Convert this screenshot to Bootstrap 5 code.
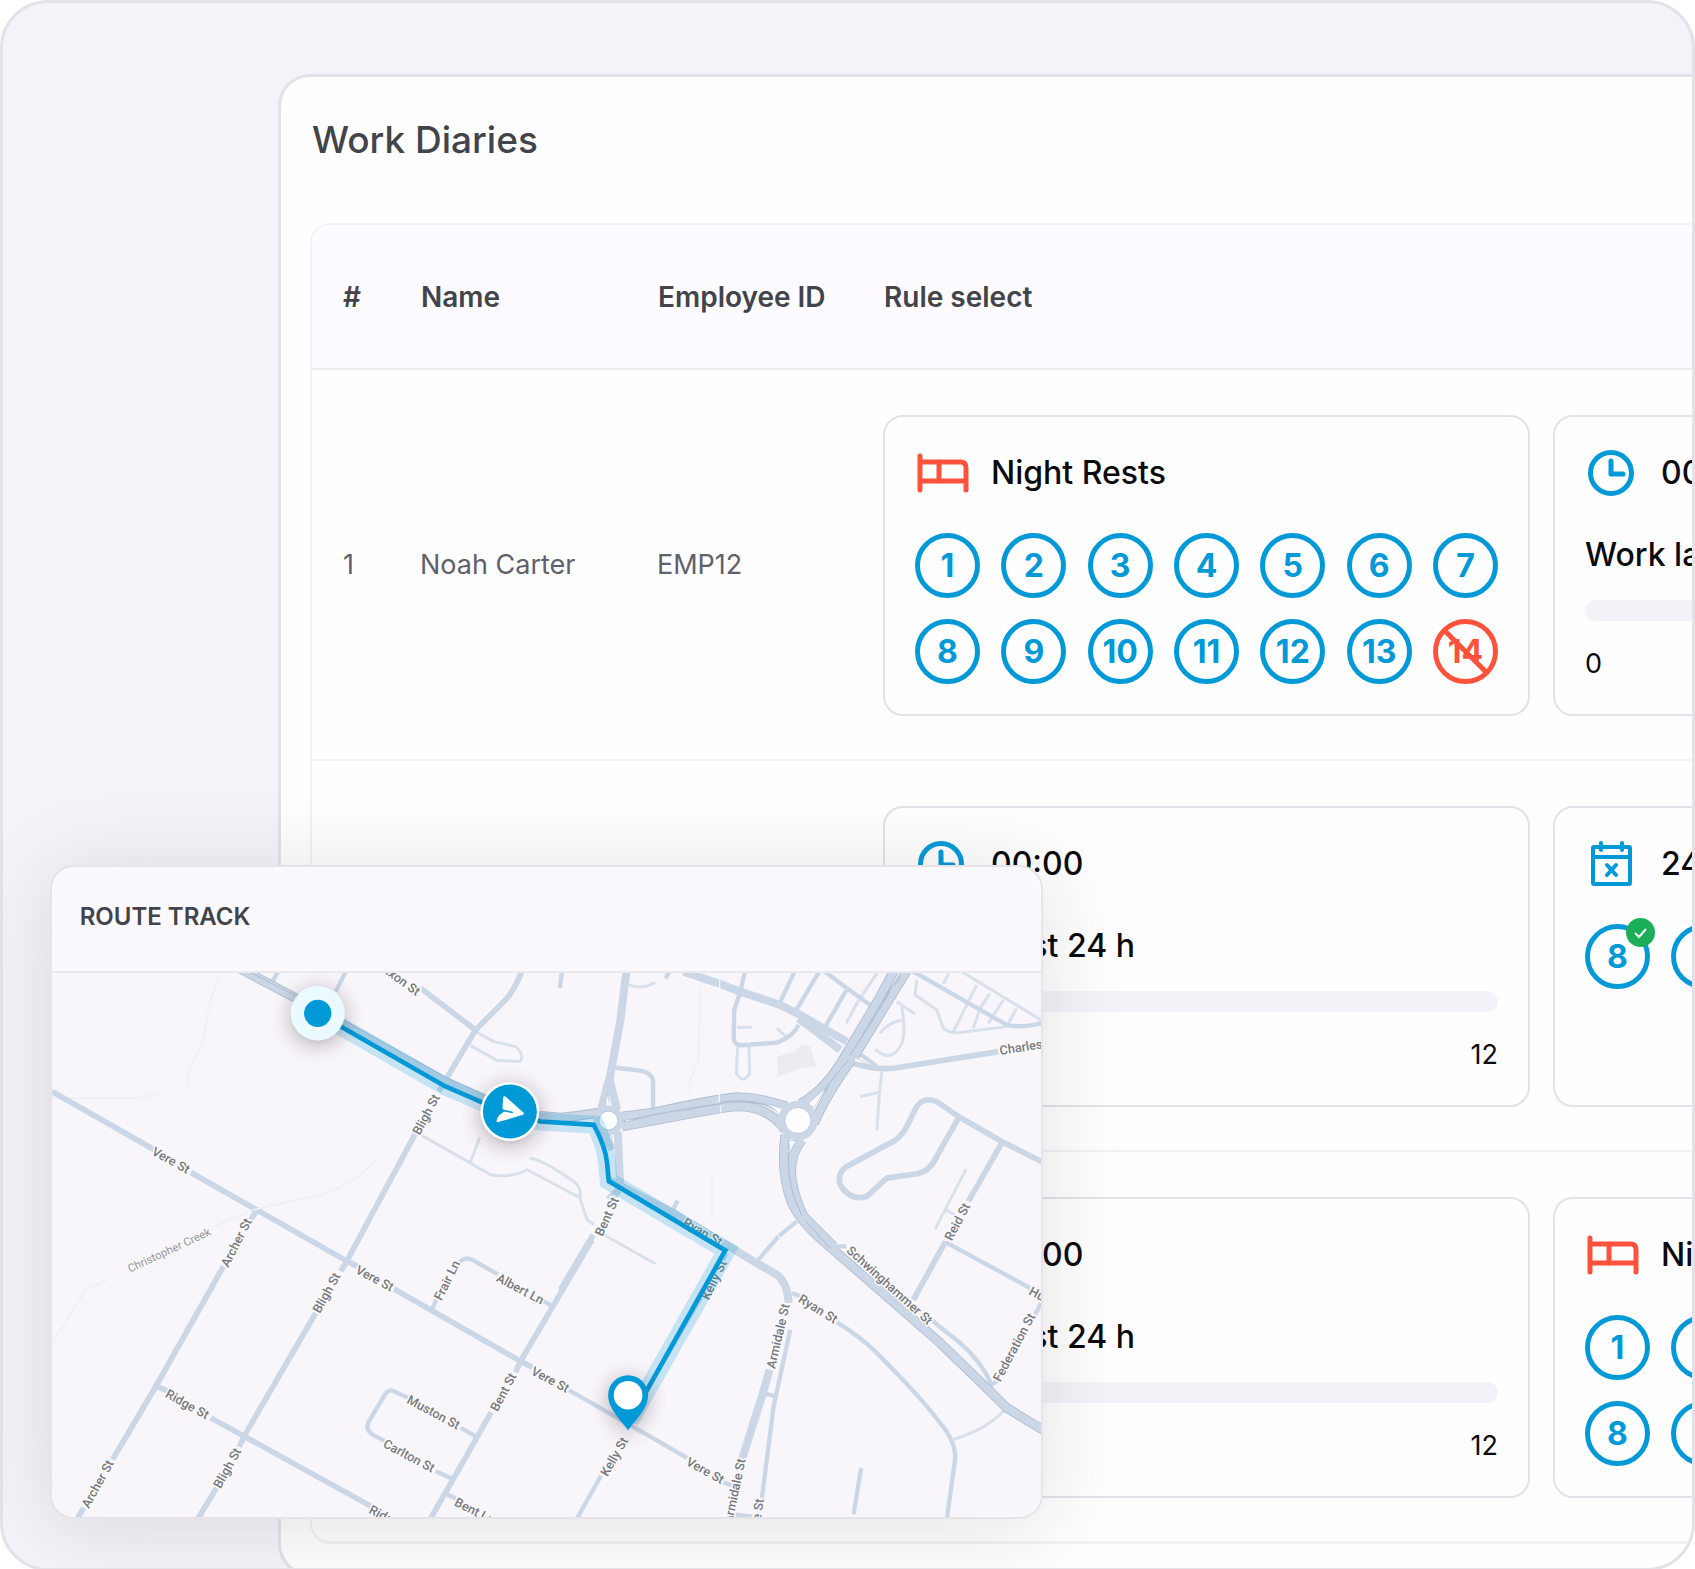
<!DOCTYPE html>
<html lang="en">
<head>
<meta charset="utf-8">
<meta name="viewport" content="width=device-width, initial-scale=1">
<title>Work Diaries</title>
<link href="https://cdn.jsdelivr.net/npm/bootstrap@5.3.0/dist/css/bootstrap.min.css" rel="stylesheet">
<style>
  :root { --blue: #0099d8; --red: #ff523b; --ink: #43444b; --line: #e3e1e9; }
  body { font-family: Inter, "Liberation Sans", sans-serif; background: #fff; }
  .stage { background: #f5f3f9; border: 3px solid #e4e2e8; border-radius: 48px; }
  .diary-panel { background: #fefefe; border: 3px solid #e4e2e8; border-right: 0; border-radius: 32px 0 0 32px; margin: 71px 0 -8px 275px; padding: 39px 0 29px 29px; }
  .diary-title { font-size: 37px; line-height: 48px; font-weight: 500; color: var(--ink); margin-bottom: 59px; padding-left: 2px; }
  .grid-frame { border: 2px solid #f3f1f5; border-bottom-width: 3px; border-right: 0; border-radius: 20px 0 0 20px; }
  .diary-grid { width: 1960px; table-layout: fixed; border-collapse: collapse; margin: 0; }
  .diary-grid th { height: 144px; background: #fdfbff; color: var(--ink); font-size: 28px; font-weight: 600; border-bottom: 2px solid #eeecf1; }
  .diary-grid td { height: 391px; padding: 45px 0 43px; font-size: 27px; color: #5f606b; vertical-align: middle; border-bottom: 2px solid #f3f1f5; }
  .diary-grid tr:last-child td { border-bottom: 0; height: 390px; }
  .diary-grid .col-first { padding-left: 31px; }
  .c-num { width: 108px; } .c-name { width: 237px; } .c-emp { width: 226px; }
  .rule-list { gap: 23px; }
  .rule-card { flex: 0 0 647px; height: 301px; border: 2px solid var(--line); border-radius: 20px; padding: 28px 30px; color: #0b0b0d; background: transparent; }
  .rule-head { gap: 22px; height: 56px; font-size: 32px; font-weight: 500; }
  .rule-head svg { width: 54px; height: 48px; flex: none; }
  .rule-sub { font-size: 32px; font-weight: 500; line-height: 40px; margin-top: 34px; }
  .track { height: 21px; border-radius: 11px; background: #f4f2f8; margin-top: 25px; }
  .scale { font-size: 27px; line-height: 36px; margin-top: 25px; }
  .days { display: grid; grid-template-columns: repeat(7, 65px); justify-content: space-between; row-gap: 21px; margin-top: 32px; }
  .day { width: 65px; height: 65px; border: 5px solid var(--blue); border-radius: 50%; color: var(--blue); font-size: 32px; font-weight: 700; }
  .day-missed { color: var(--red); border-color: var(--red); }
  .day-missed svg { position: absolute; inset: 0; width: 100%; height: 100%; }
  .tick-mark { position: absolute; right: -10px; top: -11px; width: 29px; height: 29px; }
  .route-card { position: absolute; left: 3%; bottom: 49px; width: 59%; margin-left: -4px; max-width: 993px; background: #fbf9fd; border: 2px solid #e6e4ea; border-radius: 24px; box-shadow: 0 8px 84px rgba(35, 28, 45, .13); overflow: hidden; }
  .route-title { font-size: 24px; line-height: 32px; font-weight: 600; color: var(--ink); padding: 34px 28px 38px; border-bottom: 2px solid #ebe9ee; margin: 0; }
  .route-map { display: block; width: 100%; background: #f8f6fa; }
  .route-map path { fill: none; stroke: #cbd7e7; stroke-linecap: butt; stroke-linejoin: round; }
  .route-map .lane { stroke: #d8e0ec; stroke-width: 9; }
  .route-map .small-st { stroke-width: 13; }
  .route-map .street { stroke-width: 17; }
  .route-map .avenue { stroke-width: 24; }
  .route-map .faint { stroke: #f1eff2; stroke-width: 5; }
  .route-map .edge { stroke: #aebbce; stroke-width: 29; }
  .route-map .core { stroke: #cbd7e7; stroke-width: 24; }
  .route-map .halo { stroke: var(--blue); stroke-opacity: .2; stroke-width: 54; stroke-linejoin: miter; }
  .route-map .trip { stroke: var(--blue); stroke-width: 14; stroke-linejoin: miter; }
  .route-map text { font: 500 38px Roboto, "Liberation Sans", sans-serif; fill: #77787c; stroke: #fbfafc; stroke-width: 9px; stroke-linejoin: round; paint-order: stroke; }
  .route-map .creek { font-weight: 400; font-size: 34px; fill: #96979c; }
</style>
<script src="https://cdn.jsdelivr.net/npm/bootstrap@5.3.0/dist/js/bootstrap.bundle.min.js"></script>
</head>
<body>
<svg class="d-none" aria-hidden="true">
  <symbol id="i-bed" viewBox="0 0 54 48"><g fill="none" stroke="#ff523b" stroke-width="5" stroke-linecap="round"><path d="M5 7V41M5 13H46Q51 13 51 19V41M5 32H51" /><path d="M24 13V32" /></g></symbol>
  <symbol id="i-clock" viewBox="0 0 54 48"><g fill="none" stroke="#0099d8" stroke-width="5"><circle cx="26" cy="24" r="20.5"/><path d="M26 12V25H38" stroke-linecap="round" stroke-linejoin="round"/></g></symbol>
  <symbol id="i-cal" viewBox="0 0 54 48"><g fill="none" stroke="#0099d8" stroke-width="4" stroke-linecap="round" stroke-linejoin="round"><rect x="8" y="7" width="37" height="37" rx="1"/><path d="M8 17H45M16 3V10M37 3V10"/><path d="M22 25L31 35M31 25L22 35"/></g></symbol>
</svg>

<main class="stage position-relative overflow-hidden">
  <section class="diary-panel">
    <h1 class="diary-title">Work Diaries</h1>
    <div class="grid-frame overflow-hidden">
      <table class="diary-grid">
        <colgroup><col class="c-num"><col class="c-name"><col class="c-emp"><col></colgroup>
        <thead><tr><th class="col-first" scope="col">#</th><th scope="col">Name</th><th scope="col">Employee ID</th><th scope="col">Rule select</th></tr></thead>
        <tbody>
          <tr>
            <td class="col-first">1</td><td>Noah Carter</td><td>EMP12</td>
            <td><div class="rule-list d-flex">
              <div class="rule-card">
                <div class="rule-head d-flex align-items-center"><svg><use href="#i-bed"/></svg><span>Night Rests</span></div>
                <div class="days">
                  <span class="day d-flex align-items-center justify-content-center">1</span><span class="day d-flex align-items-center justify-content-center">2</span><span class="day d-flex align-items-center justify-content-center">3</span><span class="day d-flex align-items-center justify-content-center">4</span><span class="day d-flex align-items-center justify-content-center">5</span><span class="day d-flex align-items-center justify-content-center">6</span><span class="day d-flex align-items-center justify-content-center">7</span>
                  <span class="day d-flex align-items-center justify-content-center">8</span><span class="day d-flex align-items-center justify-content-center">9</span><span class="day d-flex align-items-center justify-content-center">10</span><span class="day d-flex align-items-center justify-content-center">11</span><span class="day d-flex align-items-center justify-content-center">12</span><span class="day d-flex align-items-center justify-content-center">13</span>
                  <span class="day day-missed position-relative d-flex align-items-center justify-content-center">14<svg viewBox="0 0 55 55"><path d="M7 7L48 48" stroke="#ff523b" stroke-width="5"/></svg></span>
                </div>
              </div>
              <div class="rule-card">
                <div class="rule-head d-flex align-items-center"><svg><use href="#i-clock"/></svg><span>00:00</span></div>
                <div class="rule-sub">Work last 24 h</div><div class="track"></div>
                <div class="scale d-flex justify-content-between"><span>0</span></div>
              </div>
            </div></td>
          </tr>
          <tr>
            <td></td><td></td><td></td>
            <td><div class="rule-list d-flex">
              <div class="rule-card">
                <div class="rule-head d-flex align-items-center"><svg><use href="#i-clock"/></svg><span>00:00</span></div>
                <div class="rule-sub">Work last 24 h</div><div class="track"></div>
                <div class="scale d-flex justify-content-end"><span>12</span></div>
              </div>
              <div class="rule-card">
                <div class="rule-head d-flex align-items-center"><svg><use href="#i-cal"/></svg><span>24 h</span></div>
                <div class="days">
                  <span class="day position-relative d-flex align-items-center justify-content-center">8<svg class="tick-mark" viewBox="0 0 29 29"><circle cx="14.5" cy="14.5" r="14.5" fill="#1bae58"/><path d="M9 15L13 19L20 11" fill="none" stroke="#fff" stroke-width="2"/></svg></span>
                  <span class="day"></span>
                </div>
              </div>
            </div></td>
          </tr>
          <tr>
            <td></td><td></td><td></td>
            <td><div class="rule-list d-flex">
              <div class="rule-card">
                <div class="rule-head d-flex align-items-center"><svg><use href="#i-clock"/></svg><span>00:00</span></div>
                <div class="rule-sub">Work last 24 h</div><div class="track"></div>
                <div class="scale d-flex justify-content-end"><span>12</span></div>
              </div>
              <div class="rule-card">
                <div class="rule-head d-flex align-items-center"><svg><use href="#i-bed"/></svg><span>Night Rests</span></div>
                <div class="days">
                  <span class="day d-flex align-items-center justify-content-center">1</span><span class="day"></span><span class="day"></span><span class="day"></span><span class="day"></span><span class="day"></span><span class="day"></span>
                  <span class="day d-flex align-items-center justify-content-center">8</span><span class="day"></span>
                </div>
              </div>
            </div></td>
          </tr>
        </tbody>
      </table>
    </div>
  </section>

  <section class="route-card">
    <h2 class="route-title">ROUTE TRACK</h2>
    <svg class="route-map" viewBox="0 0 2970 1635" role="img" aria-label="Route map">
      <defs>
        <filter id="soft" x="-80%" y="-80%" width="260%" height="260%"><feDropShadow dx="0" dy="12" stdDeviation="28" flood-color="#3a2c34" flood-opacity=".38"/></filter>
      </defs>
      <!-- north-west streets -->
      <g transform="translate(-33 -369)">
        <path class="faint" d="M535 380Q500 460 490 560L440 680V710M33 745L290 745L360 730M660 1075L860 1030Q960 990 1010 920"/>
        <path class="lane" d="M1305 545L1360 575L1425 590Q1452 612 1440 635L1370 632L1290 587M1140 855L1290 940L1350 975Q1410 985 1460 960L1615 1042M1318 862L1288 940M1467 925Q1500 925 1600 995Q1625 1015 1618 1045L1640 1110L1660 1125M1690 1155L1845 1242"/>
        <path class="small-st" d="M695 395L712 365M885 425L915 365"/>
        <path class="street" d="M1140 415L1305 540M1445 360Q1420 430 1380 465L1305 540L1215 690L1195 725M1125 850L915 1240L900 1265M33 725L340 900M450 968L920 1235L950 1250"/>
        <path class="edge" d="M600 357L770 447L1210 694L1330 748L1480 796L1560 803L1610 798L1690 786"/>
        <path class="core" d="M600 357L770 447L1210 694L1330 748L1480 796L1560 803L1610 798L1690 786"/>
        <path d="M600 352L770 440" style="stroke:#aebbce;stroke-width:3"/>
      </g>
      <!-- south-west streets -->
      <g transform="translate(-33 681)">
        <path class="faint" d="M640 30L520 80M200 240L135 270L33 430M640 30L760 0"/>
        <path class="street" d="M645 35L630 60M548 200L345 560L215 780M128 925L108 960M825 340L610 710L595 742M527 865L470 960M345 560L380 574M510 655L610 710L990 920M1060 268L1440 485L1475 503M1655 120L1440 485L1425 518M1352 638L1240 835L1168 960"/>
        <path class="small-st" d="M1175 328L1187 300M1255 190Q1270 170 1295 180L1372 224M1505 303L1532 317M1102 595L1055 573Q1040 570 1030 590L985 665Q970 690 1000 708L1032 724M1260 685L1305 710M1185 815L1235 838M1220 885L1246 897"/>
      </g>
      <!-- south-east streets -->
      <g transform="translate(1467 681)">
        <path class="small-st" d="M560 160L262 670M182 828L108 960M85 572L262 672L440 775M550 848L575 858M755 280L780 290M890 368Q960 410 1010 460Q1140 590 1200 670Q1250 730 1245 780L1220 960M750 390L700 620L665 895M675 582L705 590M963 805L940 945M1175 362L1260 430Q1320 480 1355 555L1375 542M1215 125L1120 300M1218 128L1470 265M1503 310L1485 345M580 945L635 952"/>
        <path class="avenue" d="M688 510L665 590L605 780"/>
        <path class="lane" d="M1240 720Q1340 690 1395 630"/>
        <path class="edge" d="M865 138L1040 290L1200 430L1350 575L1400 625L1510 692"/>
      </g>
      <!-- north-east streets -->
      <g transform="translate(1467 -39)">
        <path d="M710 290L765 275Q790 240 810 262L830 320L780 325L712 352Z" style="fill:#ecebef;stroke:none"/>
        <path class="faint" d="M480 80L475 300L450 360L445 400M515 650V780" />
        <path class="lane" d="M265 75Q300 90 345 68M590 202H635M710 205L735 228M1010 40L950 130L918 190M1025 335L1018 400L1010 512M960 410L1015 398M1130 60L1125 105L1190 150L1210 205Q1225 220 1260 218L1400 200M1260 32L1503 180M1310 75L1240 215M1350 100L1320 145L1300 205M1390 120L1345 190M1430 145L1405 190M1225 40L1210 72M1085 140Q1100 230 1080 260Q1050 310 1005 268M1085 180Q1040 190 1020 220M1070 125L1125 162M1278 628L1185 808M1215 750L1245 765M592 260L588 340Q608 375 628 340L626 260"/>
        <path class="small-st" d="M65 30L58 85M390 30L375 55M215 322L300 332Q340 340 338 370V445M615 30L600 95L582 150L580 230Q580 257 605 256L710 248Q760 230 775 195M765 30L718 130M840 30L765 155M850 32L920 85L990 135M920 88L855 200M770 785L715 830L650 905M878 860H918M412 722L398 750M1115 32L1400 195Q1440 205 1503 190M950 275L1010 320"/>
        <path class="street" d="M940 310Q1000 330 1060 325L1375 275M1385 550L1285 725M1215 848L1120 1020M1510 608L1385 545L1255 470L1190 425Q1150 410 1130 440L1100 500Q1080 540 1040 555L920 620Q890 640 900 675Q930 725 980 710L1040 655L1130 642Q1170 635 1190 590L1255 475M158 825L60 990"/>
        <path class="avenue" d="M258 30L240 180L205 370M205 360L182 450M208 360L230 450M430 35L540 72L600 95L720 135L780 165L920 245M775 175L900 270M232 515L240 690M190 515L215 570M236 690L205 720M205 660L400 760L550 850L640 905L710 945Q742 970 745 1030" />
        <path class="edge" d="M245 470L345 457Q560 410 600 412Q650 412 740 440M245 500Q400 470 540 445Q670 420 735 510M1068 20L1020 110L925 270Q860 390 780 432M1108 20L1040 130L945 285Q860 400 822 490M735 525Q720 640 755 730Q790 800 875 865M785 540Q745 590 755 660Q765 720 790 770L880 860"/>
        <path class="core" d="M245 470L345 457Q560 410 600 412Q650 412 740 440M245 500Q400 470 540 445Q670 420 735 510M1068 20L1020 110L925 270Q860 390 780 432M1108 20L1040 130L945 285Q860 400 822 490M735 525Q720 640 755 730Q790 800 875 865M785 540Q745 590 755 660Q765 720 790 770L880 860"/>
        <path class="core" d="M865 858L1040 1010L1200 1150L1350 1295L1400 1345L1510 1412"/>
        <path d="M1085 45L1065 75M1050 95L995 185L930 285M925 300L850 390M745 590Q740 680 785 768M797 785L870 865M250 484Q400 450 540 432M540 427Q660 410 725 465" style="stroke:#aebbce;stroke-width:3"/>
        <path d="M195 430L200 400L207 430M665 430Q700 435 728 447L718 465Q700 440 665 430M804 432L858 382L822 444ZM745 542H768L750 575ZM206 528L214 560V528ZM945 292L985 315L942 306ZM255 480H285L255 486Z" style="fill:#faf8fc;stroke:#b6c2d3;stroke-width:2"/>
        <path d="M538 60V84M537 402V428M541 438V458M710 824L722 838" style="stroke:#f4f3f8;stroke-width:4"/>
        <circle cx="204" cy="482" r="36" fill="#fdfcff" stroke="#cbd7e7" stroke-width="18"/><circle cx="204" cy="482" r="28" fill="#fefdff" stroke="#aebbce" stroke-width="2"/>
        <circle cx="773" cy="482" r="48" fill="#fefdff" stroke="#cbd7e7" stroke-width="22"/><circle cx="773" cy="482" r="39" fill="#fefdff" stroke="#aebbce" stroke-width="2"/>
      </g>
      <!-- street names -->
      <g>
        <text transform="translate(978 -14) rotate(36)">Nixon St</text>
        <text transform="translate(1104 489) rotate(-62)">Bligh St</text>
        <text transform="translate(297 544) rotate(29)">Vere St</text>
        <text class="creek" transform="translate(234 900) rotate(-25)">Christopher Creek</text>
        <text transform="translate(529 886) rotate(-63)">Archer St</text>
        <text transform="translate(110 1610) rotate(-61)">Archer St</text>
        <text transform="translate(804 1024) rotate(-61)">Bligh St</text>
        <text transform="translate(506 1550) rotate(-61)">Bligh St</text>
        <text transform="translate(909 900) rotate(28)">Vere St</text>
        <text transform="translate(338 1272) rotate(29)">Ridge St</text>
        <text transform="translate(949 1620) rotate(28)">Ridge St</text>
        <text transform="translate(1170 986) rotate(-64)">Frair Ln</text>
        <text transform="translate(1332 924) rotate(28)">Albert Ln</text>
        <text transform="translate(1063 1290) rotate(28)">Muston St</text>
        <text transform="translate(992 1422) rotate(28)">Carlton St</text>
        <text transform="translate(1206 1598) rotate(27)">Bent Ln</text>
        <text transform="translate(1338 1319) rotate(-62)">Bent St</text>
        <text transform="translate(1653 793) rotate(-66)">Bent St</text>
        <text transform="translate(1436 1204) rotate(28)">Vere St</text>
        <text transform="translate(1892 757) rotate(30)">Ryan St</text>
        <text transform="translate(1972 984) rotate(-64)">Kelly St</text>
        <text transform="translate(1668 1514) rotate(-60)">Kelly St</text>
        <text transform="translate(1902 1476) rotate(29)">Vere St</text>
        <text transform="translate(2239 986) rotate(32)">Ryan St</text>
        <text transform="translate(2171 1190) rotate(-77)">Armidale St</text>
        <text transform="translate(2042 1655) rotate(-78)">Armidale St</text>
        <text transform="translate(2110 1777) rotate(-82)">Armidale St</text>
        <text transform="translate(2384 837) rotate(42)">Schwinghammer St</text>
        <text transform="translate(2702 806) rotate(-62)">Reid St</text>
        <text transform="translate(2848 1230) rotate(-62)">Federation St</text>
        <text transform="translate(2931 964) rotate(28)">Hume St</text>
        <text transform="translate(2848 246) rotate(-9)">Charles St</text>
      </g>
      <!-- driven route -->
      <path class="halo" d="M798 121L1180 340L1300 392L1375 418L1467 446L1632 456Q1662 520 1667 571L1672 625L2026 833L1735 1345"/>
      <path class="trip" d="M798 121L1180 340L1300 392L1375 418L1467 446L1627 456Q1662 520 1667 571L1672 625L2022 833L1735 1345"/>
      <g filter="url(#soft)"><circle cx="798" cy="121" r="81" fill="#ebfaff"/></g><circle cx="798" cy="121" r="41" fill="#0099d8"/>
      <g filter="url(#soft)"><circle cx="1375" cy="416" r="88" fill="#fff"/></g><circle cx="1375" cy="416" r="81" fill="#0099d8"/>
      <path d="M1359 374L1413 422L1339 444Q1341 436 1346 430L1362 418L1384 418L1357 406Z" style="fill:#fff;stroke:#fff;stroke-width:8"/>
      <path d="M1352 412L1384 419" style="stroke:#0099d8;stroke-width:5"/>
      <g filter="url(#soft)"><path d="M1730 1373C1700 1335 1670 1305 1670 1268A60 60 0 0 1 1790 1268C1790 1305 1760 1335 1730 1373Z" style="fill:#0099d8;stroke:none"/></g>
      <circle cx="1730" cy="1268" r="43" fill="#fff"/>
    </svg>
  </section>
</main>
</body>
</html>
